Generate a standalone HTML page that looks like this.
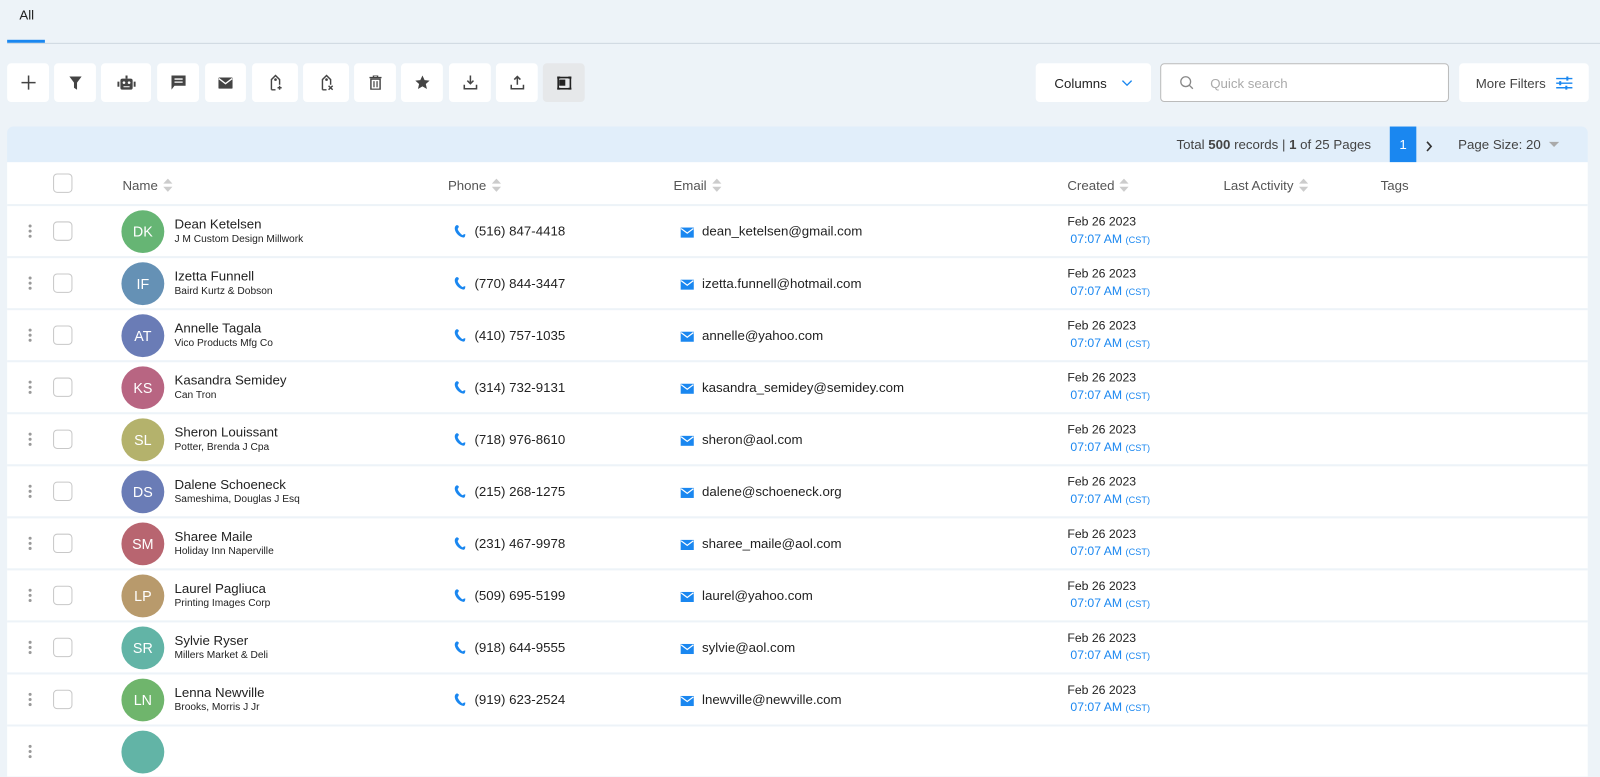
<!DOCTYPE html>
<html><head><meta charset="utf-8"><style>
*{box-sizing:border-box;margin:0;padding:0}
body{width:1600px;height:730px;overflow:hidden;background:#edf3f8;font-family:"Liberation Sans",sans-serif;color:#333;position:relative}
#w{position:absolute;left:0;top:0;width:1568px;height:716px;transform:scale(1.0204);transform-origin:0 0}
.abs{position:absolute}
.btn{position:absolute;top:62px;height:38px;background:#fff;border-radius:4px;display:flex;align-items:center;justify-content:center}
.row{position:absolute;left:7px;width:1549px;height:51px;background:#fff;border-top:2px solid #edf3f8}
.dots{position:absolute;left:21px;top:18px;width:4px}
.dots i{display:block;width:3px;height:3px;border-radius:50%;background:#999;margin-bottom:2px}
.cb{position:absolute;left:45px;top:15px;width:19px;height:19px;border:1px solid #c8c8c8;border-radius:4px;background:#fff}
.av{position:absolute;left:112px;top:4px;width:42px;height:42px;border-radius:50%;color:#fff;font-size:14px;display:flex;align-items:center;justify-content:center}
.nm{position:absolute;left:164px;top:10px;font-size:13px;color:#222}
.co{position:absolute;left:164px;top:27px;font-size:10px;color:#222}
.ph{position:absolute;left:438px;top:17px;font-size:13px;color:#222}
.em{position:absolute;left:660px;top:17px;font-size:13px;color:#222}
.dt{position:absolute;left:1039px;top:8px;font-size:12px;color:#222}
.tm{position:absolute;left:1042px;top:25px;font-size:12px;color:#1a87f0}
.tm small{font-size:9px}
.ph svg,.em svg{vertical-align:-2px;margin-right:8px}
.hd{position:absolute;top:174px;font-size:13px;color:#555}
.sort{display:inline-block;vertical-align:-2px;margin-left:5px;width:9px;height:13px}
</style></head><body><div id="w">
<div class="abs" style="left:19px;top:7px;font-size:13px;color:#222">All</div>
<div class="abs" style="left:7px;top:39px;width:37px;height:3px;background:#1a87f0"></div>
<div class="abs" style="left:7px;top:42px;width:1593px;height:1px;background:#cfd8e0"></div>

<div class="btn" style="left:7px;width:41px"><svg width="14" height="14"><path d="M7 0v14M0 7h14" stroke="#444" stroke-width="1.5"/></svg></div>
<div class="btn" style="left:53px;width:41px"><svg width="12" height="13"><path d="M0 0h12L7.5 6v7l-3-2V6z" fill="#444"/></svg></div>
<div class="btn" style="left:99px;width:49px"><svg width="18" height="14"><rect x="3" y="3" width="12" height="11" rx="2" fill="#444"/><rect x="0" y="6" width="2" height="5" fill="#444"/><rect x="16" y="6" width="2" height="5" fill="#444"/><rect x="8" y="0" width="2" height="3" fill="#444"/><circle cx="6.5" cy="7" r="1.3" fill="#fff"/><circle cx="11.5" cy="7" r="1.3" fill="#fff"/><path d="M6 11h6" stroke="#fff"/></svg></div>
<div class="btn" style="left:154px;width:41px"><svg width="14" height="14"><path d="M0 0h14v10H3l-3 4z" fill="#444"/><path d="M3 3.5h8M3 6.5h8" stroke="#fff" stroke-width="1.3"/></svg></div>
<div class="btn" style="left:201px;width:40px"><svg width="14" height="11"><rect width="14" height="11" rx="1" fill="#444"/><path d="M0.5 1l6.5 5 6.5-5" stroke="#fff" fill="none" stroke-width="1.3"/></svg></div>
<div class="btn" style="left:247px;width:45px"><svg width="14" height="16"><path d="M3 15V5l4-4 4 4v5M3 15h4" stroke="#444" stroke-width="1.4" fill="none"/><circle cx="7" cy="5" r="1.3" fill="#444"/><path d="M11 11v4M9 13h4" stroke="#444" stroke-width="1.4"/></svg></div>
<div class="btn" style="left:297px;width:45px"><svg width="14" height="16"><path d="M3 15V5l4-4 4 4v5M3 15h4" stroke="#444" stroke-width="1.4" fill="none"/><circle cx="7" cy="5" r="1.3" fill="#444"/><path d="M9 11l4 4M13 11l-4 4" stroke="#444" stroke-width="1.4"/></svg></div>
<div class="btn" style="left:347px;width:41px"><svg width="12" height="14"><path d="M0 2h12M4 2V0h4v2" stroke="#444" stroke-width="1.4" fill="none"/><rect x="1.5" y="3.5" width="9" height="10" fill="none" stroke="#444" stroke-width="1.4"/><path d="M4.5 5.5v6M7.5 5.5v6" stroke="#444" stroke-width="1.2"/></svg></div>
<div class="btn" style="left:393px;width:41px"><svg width="14" height="14"><path d="M7 0l2.1 4.5 4.9.5-3.7 3.3 1.1 4.9L7 10.7 2.6 13.2l1.1-4.9L0 5l4.9-.5z" fill="#444"/></svg></div>
<div class="btn" style="left:440px;width:41px"><svg width="14" height="14"><path d="M7 0v8M4 5l3 3 3-3M1 9v4h12V9" stroke="#444" stroke-width="1.5" fill="none"/></svg></div>
<div class="btn" style="left:486px;width:41px"><svg width="14" height="14"><path d="M7 9V1M4 4l3-3 3 3M1 9v4h12V9" stroke="#444" stroke-width="1.5" fill="none"/></svg></div>
<div class="btn" style="left:532px;width:41px;background:#e6e8ea"><svg width="14" height="13"><rect x="1" y="1" width="12" height="11" fill="none" stroke="#222" stroke-width="1.6"/><rect x="2" y="3" width="6" height="6" fill="#222"/><path d="M0 1h3M11 1h3M0 12h3M11 12h3" stroke="#222" stroke-width="2"/></svg></div>

<div class="btn" style="left:1015px;width:113px;font-size:13px;color:#222">Columns<svg width="11" height="7" style="margin-left:14px"><path d="M1 1l4.5 4.5L10 1" stroke="#1a87f0" stroke-width="1.3" fill="none"/></svg></div>
<div class="btn" style="left:1137px;width:283px;border:1px solid #bbb;justify-content:flex-start;padding-left:18px;font-size:13px;color:#aaa"><svg width="14" height="14" style="margin-right:16px"><circle cx="6" cy="6" r="4.8" stroke="#888" stroke-width="1.3" fill="none"/><path d="M9.5 9.5l3.5 3.5" stroke="#888" stroke-width="1.3"/></svg>Quick search</div>
<div class="btn" style="left:1430px;width:127px;font-size:13px;color:#444">More Filters<svg width="16" height="13" style="margin-left:10px"><path d="M0 2h16M0 6.5h16M0 11h16" stroke="#1a87f0" stroke-width="1.4"/><path d="M11 0v4M4 4.5v4M10 9v4" stroke="#1a87f0" stroke-width="2"/></svg></div>

<div class="abs" style="left:7px;top:124px;width:1549px;height:35px;background:#e1eefa;border-radius:6px 6px 0 0"></div>
<div class="abs" style="left:1153px;top:134px;font-size:13px;color:#444">Total <b>500</b> records | <b>1</b> of 25 Pages</div>
<div class="abs" style="left:1362px;top:124px;width:26px;height:35px;background:#1a87f0;color:#fff;font-size:13px;text-align:center;line-height:35px">1</div>
<div class="abs" style="left:1397px;top:136px"><svg width="7" height="11"><path d="M1.5 1l4 4.5-4 4.5" stroke="#333" stroke-width="1.6" fill="none"/></svg></div>
<div class="abs" style="left:1429px;top:134px;font-size:13px;color:#444">Page Size: 20</div>
<div class="abs" style="left:1518px;top:139px;border-left:5px solid transparent;border-right:5px solid transparent;border-top:5px solid #aaa"></div>

<div class="abs" style="left:7px;top:159px;width:1549px;height:43px;background:#fff"></div>
<div class="abs" style="left:52px;top:170px;width:19px;height:19px;border:1px solid #c8c8c8;border-radius:4px"></div>
<div class="hd" style="left:120px">Name<svg class="sort"><path d="M0 5l4.5-5L9 5zM0 8l4.5 5L9 8z" fill="#ccc"/></svg></div>
<div class="hd" style="left:439px">Phone<svg class="sort"><path d="M0 5l4.5-5L9 5zM0 8l4.5 5L9 8z" fill="#ccc"/></svg></div>
<div class="hd" style="left:660px">Email<svg class="sort"><path d="M0 5l4.5-5L9 5zM0 8l4.5 5L9 8z" fill="#ccc"/></svg></div>
<div class="hd" style="left:1046px">Created<svg class="sort"><path d="M0 5l4.5-5L9 5zM0 8l4.5 5L9 8z" fill="#ccc"/></svg></div>
<div class="hd" style="left:1199px">Last Activity<svg class="sort"><path d="M0 5l4.5-5L9 5zM0 8l4.5 5L9 8z" fill="#ccc"/></svg></div>
<div class="hd" style="left:1353px">Tags</div>

<div id="rows"></div>
</div>
<script>
var d=[["DK","#66b574","Dean Ketelsen","J M Custom Design Millwork","(516) 847-4418","dean_ketelsen@gmail.com"],
["IF","#6591b5","Izetta Funnell","Baird Kurtz & Dobson","(770) 844-3447","izetta.funnell@hotmail.com"],
["AT","#6a7cb6","Annelle Tagala","Vico Products Mfg Co","(410) 757-1035","annelle@yahoo.com"],
["KS","#b86582","Kasandra Semidey","Can Tron","(314) 732-9131","kasandra_semidey@semidey.com"],
["SL","#b4b26c","Sheron Louissant","Potter, Brenda J Cpa","(718) 976-8610","sheron@aol.com"],
["DS","#6a7cb6","Dalene Schoeneck","Sameshima, Douglas J Esq","(215) 268-1275","dalene@schoeneck.org"],
["SM","#b86570","Sharee Maile","Holiday Inn Naperville","(231) 467-9978","sharee_maile@aol.com"],
["LP","#b89a6c","Laurel Pagliuca","Printing Images Corp","(509) 695-5199","laurel@yahoo.com"],
["SR","#62b4a6","Sylvie Ryser","Millers Market & Deli","(918) 644-9555","sylvie@aol.com"],
["LN","#6fb56c","Lenna Newville","Brooks, Morris J Jr","(919) 623-2524","lnewville@newville.com"],
["","#62b4a6","","","",""]];
var ph='<svg width="12" height="13"><path d="M11 9.5c-1.2 0-2 .3-2.5.9C7.5 10 6.2 8.8 5 7.2 4 5.8 3.4 4.7 3.6 4c.6-.4 1-1.200 1-2.500L3 .5C1.500.8.3 2.300.8 5c.8 3.500 4 7 8.200 7.800 1.200.2 2-.8 2-3.300z" fill="#1a87f0"/></svg>';
var em='<svg width="13" height="10"><rect width="13" height="10" fill="#1a87f0"/><path d="M0.5 1l6 4.5 6-4.5" stroke="#fff" fill="none" stroke-width="1.2"/></svg>';
var h='';
d.forEach(function(r,i){var t=200+i*51;
h+='<div class="row" style="top:'+t+'px"><div class="dots"><i></i><i></i><i></i></div>'+(r[0]?'<div class="cb"></div>':'')+'<div class="av" style="background:'+r[1]+'">'+r[0]+'</div><div class="nm">'+r[2]+'</div><div class="co">'+r[3]+'</div>'+(r[4]?'<div class="ph">'+ph+r[4]+'</div><div class="em">'+em+r[5]+'</div><div class="dt">Feb 26 2023</div><div class="tm">07:07 AM <small>(CST)</small></div>':'')+'</div>';});
document.getElementById('rows').innerHTML=h;
</script>
</body></html>
